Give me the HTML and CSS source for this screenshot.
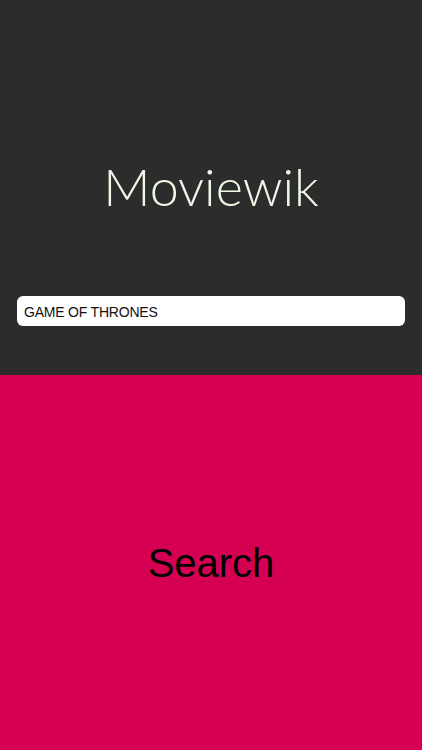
FILE: index.html
```html
<!DOCTYPE html>
<html lang="en">
<head>
  <meta charset="UTF-8" />
  <meta name="viewport" content="width=device-width, initial-scale=1" />
  <title>Moviewik</title>
  <link rel="stylesheet" href="styles.css">
</head>
<body>
  <div class="top">
    <h1>Moviewik</h1>
    <input type="text" id="query" class="query" value="GAME OF THRONES" />
  </div>
  <button class="search-btn" type="button">Search</button>
</body>
</html>
```

FILE: styles.css
```css
* {
  box-sizing: border-box;
}
body {
  margin: 0;
  height: 100vh;
  display: flex;
  flex-direction: column;
  font-family: 'Liberation Sans', Arial, sans-serif;
}
.top {
  background: #2c2c2c;
  height: 375px;
  display: flex;
  flex-direction: column;
  padding: 0 17px;
}
h1 {
  margin: 153px 0 0;
  height: 66px;
  line-height: 66px;
  text-align: center;
  font-family: 'Lato', sans-serif;
  font-weight: 300;
  font-size: 52px;
  color: #eef8e6;
}
.query {
  margin-top: 77px;
  width: 100%;
  height: 30px;
  border: none;
  border-radius: 6px;
  background: #ffffff;
  padding: 1px 7px 0;
  font-family: 'Liberation Sans', Arial, sans-serif;
  font-size: 14px;
  letter-spacing: -0.2px;
  color: #111111;
  outline: none;
}
.search-btn {
  flex: 1;
  border: none;
  margin: 0;
  background: #d60053;
  color: #000000;
  font-family: 'Liberation Sans', Arial, sans-serif;
  font-size: 40px;
  padding-top: 2px;
  cursor: pointer;
}
```
